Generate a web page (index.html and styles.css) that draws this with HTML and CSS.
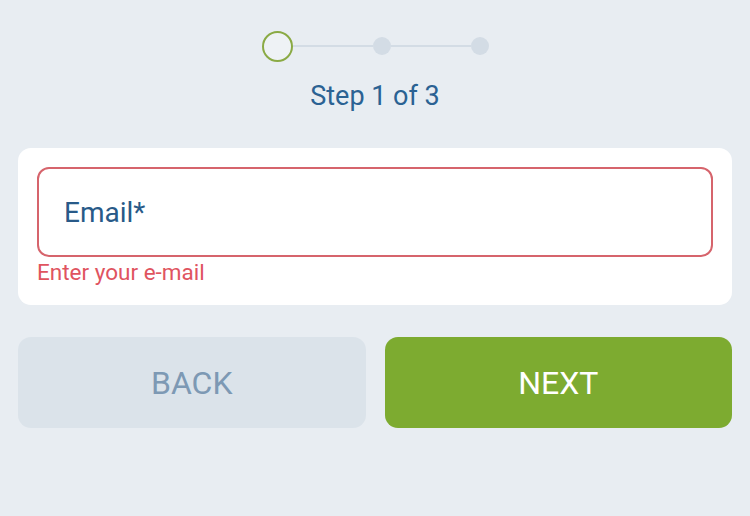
FILE: index.html
```html
<!DOCTYPE html>
<html lang="en">
<head>
<meta charset="utf-8">
<title>Step 1 of 3</title>
<link rel="stylesheet" href="styles.css">
</head>
<body>
<div class="page">
  <div class="stepper">
    <span class="step step-current"></span>
    <span class="step-line"></span>
    <span class="step step-next"></span>
    <span class="step-line"></span>
    <span class="step step-next"></span>
  </div>
  <div class="step-label">Step 1 of 3</div>
  <div class="card">
    <div class="field field-error">
      <span class="field-label">Email*</span>
    </div>
    <div class="field-message">Enter your e-mail</div>
  </div>
  <div class="actions">
    <button class="btn btn-back">BACK</button>
    <button class="btn btn-next">NEXT</button>
  </div>
</div>
</body>
</html>
```
FILE: styles.css
```css
html, body {
  margin: 0;
  padding: 0;
  background: #e8edf2;
}
body {
  font-family: Roboto, "Noto Sans", Arial, sans-serif;
}
.page {
  width: 750px;
  height: 516px;
  padding: 31px 18px 0;
  box-sizing: border-box;
  display: flex;
  flex-direction: column;
}
.stepper {
  display: flex;
  align-items: center;
  justify-content: center;
  height: 30px;
  flex: none;
}
.step {
  box-sizing: border-box;
  border-radius: 50%;
  flex: none;
}
.step-current {
  width: 31px;
  height: 31px;
  border: 2px solid #8aaa44;
  background: #eef2f5;
}
.step-next {
  width: 18px;
  height: 18px;
  background: #d3dce5;
}
.step-line {
  width: 80px;
  height: 2px;
  background: #d3dce5;
}
.step-label {
  margin-top: 19px;
  text-align: center;
  font-size: 27px;
  line-height: 32px;
  color: #2b6293;
  flex: none;
}
.card {
  margin-top: 36px;
  background: #ffffff;
  border-radius: 13px;
  padding: 19px;
  height: 157px;
  box-sizing: border-box;
  flex: none;
}
.field {
  height: 90px;
  box-sizing: border-box;
  border: 2px solid #d6646c;
  border-radius: 12px;
  display: flex;
  align-items: center;
  padding-left: 25px;
}
.field-label {
  font-size: 28px;
  line-height: 32px;
  color: #285a88;
  padding-top: 2px;
}
.field-message {
  margin-top: 1px;
  font-size: 22.5px;
  line-height: 28px;
  color: #e0545f;
}
.actions {
  margin-top: 32px;
  display: flex;
  gap: 19px;
  flex: none;
}
.btn {
  flex: 1;
  height: 91px;
  border: none;
  border-radius: 13px;
  font-family: Roboto, "Noto Sans", Arial, sans-serif;
  font-size: 32px;
  padding: 0;
}
.btn-back {
  background: #dbe3ea;
  color: #7d99b4;
}
.btn-next {
  background: #7dab30;
  color: #ffffff;
}
```
